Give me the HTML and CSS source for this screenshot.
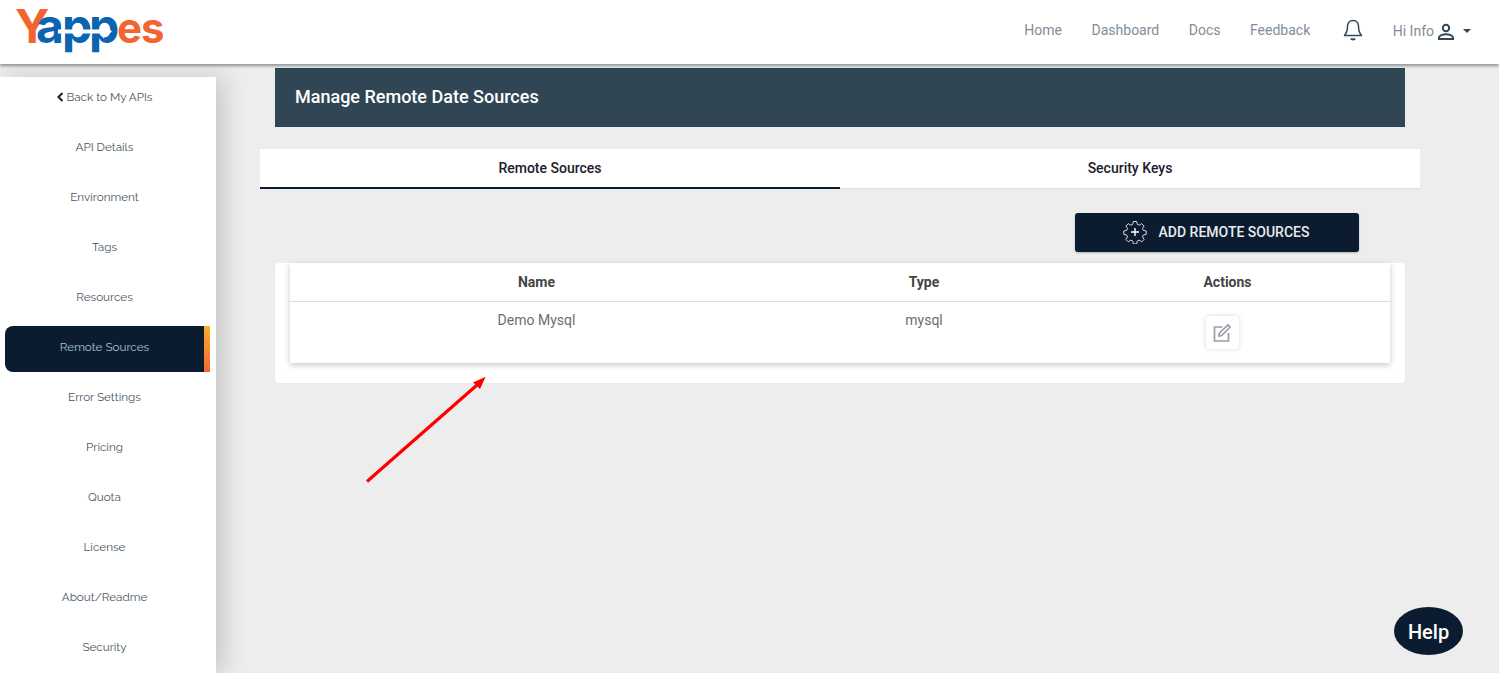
FILE: index.html
```html
<!DOCTYPE html>
<html lang="en">
<head>
<meta charset="utf-8">
<title>Manage Remote Date Sources</title>
<link rel="stylesheet" href="styles.css">
</head>
<body>
<header class="topbar">
  <svg class="logo" width="160" height="60" viewBox="10 2 160 60" role="img" aria-label="Yappes">
    <text y="43"><tspan class="logo-o cap" x="15">Y</tspan><tspan class="logo-b lg" x="36 62 89">app</tspan><tspan class="logo-o sm" x="117 141">es</tspan></text>
    <path class="logo-arrow" d="M58 29.500h45v-5l9 7-9 7v-5H58z"/>
  </svg>
  <nav class="topnav">
    <a>Home</a><a>Dashboard</a><a>Docs</a><a>Feedback</a>
    <svg class="bell" width="24" height="24" viewBox="0 0 24 24" fill="none" stroke="#33475a" stroke-width="1.5" stroke-linejoin="round"><path d="M12 2.500c-3.600 0-5.500 2.800-5.500 6 0 5-1.200 7-3 9h17c-1.800-2-3-4-3-9 0-3.200-1.900-6-5.500-6z"/><path d="M10 20.500c.6 1.200 3.400 1.200 4 0" stroke-width="2"/></svg>
    <span class="user">Hi Info
      <svg class="person" width="20" height="20" viewBox="0 0 20 20" fill="none" stroke="#33475a" stroke-width="2"><circle cx="10" cy="6" r="3.200"/><path d="M3 17v-1.500c0-2 4-3.300 7-3.300s7 1.300 7 3.300V17z"/></svg>
      <i class="caret"></i>
    </span>
  </nav>
</header>
<div class="shell">
  <aside class="sidebar">
    <a class="side-item back"><svg width="8" height="10" viewBox="0 0 8 10"><path d="M6.500 1 2.500 5l4 4" fill="none" stroke="#222b38" stroke-width="2.200"/></svg>Back to My APIs</a>
    <a class="side-item">API Details</a>
    <a class="side-item">Environment</a>
    <a class="side-item">Tags</a>
    <a class="side-item">Resources</a>
    <a class="side-item active">Remote Sources</a>
    <a class="side-item">Error Settings</a>
    <a class="side-item">Pricing</a>
    <a class="side-item">Quota</a>
    <a class="side-item">License</a>
    <a class="side-item">About/Readme</a>
    <a class="side-item">Security</a>
  </aside>
  <main class="content">
    <h1 class="banner">Manage Remote Date Sources</h1>
    <div class="tabs">
      <a class="tab selected">Remote Sources</a>
      <a class="tab">Security Keys</a>
    </div>
    <div class="actions-row">
      <button class="add-btn">
        <svg width="24" height="24" viewBox="0 0 24 24" fill="none" stroke="#d5d9de" stroke-width="1"><path d="M10.300 1.500h3.400l.6 2.900 1.900.8 2.500-1.600 2.400 2.400-1.600 2.500.8 1.900 2.900.6v3.400l-2.900.6-.8 1.900 1.600 2.500-2.400 2.400-2.500-1.600-1.900.8-.6 2.900h-3.400l-.6-2.900-1.900-.8-2.500 1.600-2.400-2.400 1.600-2.500-.8-1.900-2.900-.6v-3.400l2.900-.6.8-1.900-1.600-2.500 2.400-2.400 2.500 1.600 1.900-.8z" stroke-linejoin="round"/><path d="M12 8v8M8 12h8" stroke="#fff" stroke-width="1.400"/></svg>
        ADD REMOTE SOURCES
      </button>
    </div>
    <section class="card">
      <div class="table">
        <div class="row head"><span>Name</span><span>Type</span><span>Actions</span></div>
        <div class="row body"><span>Demo Mysql</span><span>mysql</span>
          <span class="cell-action"><a class="edit"><svg width="20" height="20" viewBox="0 0 20 20" fill="none" stroke="#989da7" stroke-width="1.700"><path d="M10.500 4H2.500v14h14v-8"/><path d="M7.500 10 16 1.800l2.200 2.200-8.500 8.500-2.800.6z" stroke-linejoin="round"/></svg></a></span>
        </div>
      </div>
    </section>
  </main>
</div>
<svg class="annot" width="130" height="115" viewBox="0 0 130 115"><path d="M6 108.500 116 12" stroke="#f00" stroke-width="3.200"/><path d="M124.700 3.700 119 16 112 9.500z" fill="#f00"/></svg>
<a class="help">Help</a>
</body>
</html>
```
FILE: styles.css
```css
* { box-sizing: border-box; }
html, body { margin: 0; height: 673px; overflow: hidden; }
body { background: #ededed; font-family: Roboto, sans-serif; display: flex; flex-direction: column; }
a { text-decoration: none; color: inherit; }

.topbar { position: relative; z-index: 3; height: 64px; flex: none; background: #fff; display: flex; align-items: center; justify-content: space-between; padding: 0 28px 0 10px; box-shadow: 0 2px 3px rgba(60,75,90,.55); }
.logo { flex: none; }
.logo text { font-family: Inter, sans-serif; font-weight: 700; }
.logo .cap { font-size: 47px; }
.logo .lg { font-size: 48px; }
.logo .sm { font-size: 42px; }
.logo-o { fill: #f26531; }
.logo-b { fill: #0b64b0; }
.logo-arrow { fill: #fff; }

.topnav { display: flex; align-items: center; font-size: 14px; color: #7f8d9a; }
.topnav > a { margin-right: 29.500px; padding-bottom: 4px; }
.bell { margin: -4px 28px 0 1px; }
.user { display: flex; align-items: center; gap: 2px; padding-bottom: 2px; }
.person { margin-top: 1px; }
.caret { width: 0; height: 0; margin-left: 5px; border: 4px solid transparent; border-top-color: #33475a; border-bottom: 0; }

.shell { flex: 1; display: flex; min-height: 0; }
.sidebar { width: 216px; flex: none; margin-top: 13px; background: #fff; padding-left: 5px; padding-right: 6px; box-shadow: 8px 0 22px rgba(0,0,0,.16); z-index: 1; font-family: Raleway, Lato, sans-serif; font-size: 11.700px; color: #4a5563; overflow: hidden; }
.side-item { display: flex; align-items: center; justify-content: center; height: 50px; padding-right: 6px; }
.back { margin-top: -5px; }
.back svg { margin-right: 2px; }
.active { height: 46px; margin-top: 4px; padding: 0 0 4px; background: #0c1c30; color: #a9c4dc; border-radius: 8px 0 0 8px; border-width: 0 6px 0 0; border-style: solid; border-image: linear-gradient(#fbb02d, #f26531) 1; }

.content { flex: 1; padding: 4px 79px 0 44px; }
.banner { margin: 0 15px; height: 59px; background: #304655; color: #fff; font-size: 18px; font-weight: 500; line-height: 57px; padding-left: 20px; }
.tabs { display: flex; margin-top: 22px; height: 40px; background: #fff; border-bottom: 1px solid #ddd; }
.tab { flex: 1; text-align: center; line-height: 38px; font-size: 14px; font-weight: 500; color: #1a202c; }
.selected { border-bottom: 2px solid #0c1c30; height: 40px; }
.actions-row { display: flex; justify-content: flex-end; margin-top: 24px; padding-right: 61px; }
.add-btn { display: flex; align-items: center; justify-content: center; gap: 12px; width: 284px; height: 39px; border: 0; border-radius: 3px; background: #0c1c30; color: #e8ebee; font: 500 14px Roboto, sans-serif; box-shadow: 0 1px 2px rgba(0,0,0,.25); padding: 0 2px 2px 0; }

.card { margin: 11px 15px 0; height: 120px; background: #fff; border-radius: 4px; padding: 0 15px; }
.table { height: 100px; background: #fff; box-shadow: 0 2px 6px rgba(0,0,0,.22); font-size: 14px; }
.row { display: grid; grid-template-columns: 493px 282px 325px; text-align: center; }
.head { height: 39px; line-height: 38px; font-weight: 700; color: #444; border-bottom: 1px solid #ddd; }
.body { color: #6e6e6e; padding-top: 9px; line-height: 18px; }
.cell-action { display: flex; justify-content: center; padding-right: 11px; padding-top: 5px; }
.edit { width: 33px; height: 33px; border-radius: 4px; display: flex; align-items: center; justify-content: center; background: #fff; box-shadow: 0 0 4px rgba(0,0,0,.16); }

.annot { position: absolute; left: 361px; top: 373px; z-index: 4; }
.help { position: fixed; left: 1394px; top: 607px; width: 69px; height: 48px; border-radius: 50%; background: #0c1c30; color: #fff; font-size: 20px; font-weight: 500; line-height: 51px; text-align: center; z-index: 5; }
```
